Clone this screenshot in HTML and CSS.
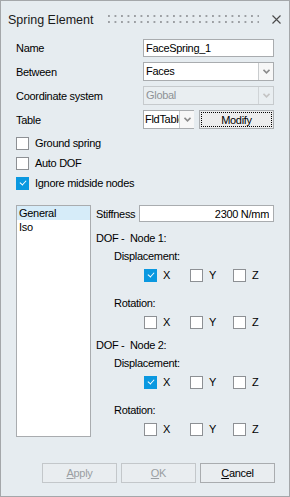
FILE: index.html
```html
<!DOCTYPE html>
<html lang="en">
<head>
    <meta charset="UTF-8">
    <meta name="viewport" content="width=device-width, initial-scale=1.0">
    <title>Spring Element</title>
    <link rel="stylesheet" href="styles.css">
</head>
<body>

<div class="dialog">
    <div class="titlebar">
        <span class="title">Spring Element</span>
        <div class="grip"></div>
        <svg class="close" width="9" height="9" viewBox="0 0 9 9"><path d="M0.5 0.5 L8.5 8.5 M8.5 0.5 L0.5 8.5" stroke="#4a4a4a" stroke-width="1.1" fill="none"/></svg>
    </div>

    <div class="form">
        <div class="field">
            <label>Name</label>
            <input class="text-input" type="text" value="FaceSpring_1">
        </div>
        <div class="field">
            <label>Between</label>
            <div class="select">
                <span class="value">Faces</span>
                <span class="arrow"><svg width="7" height="5" viewBox="0 0 7 5"><path d="M0.5 0.8 L3.5 3.8 L6.5 0.8" stroke="#8c8c8c" stroke-width="1.6" fill="none"/></svg></span>
            </div>
        </div>
        <div class="field">
            <label>Coordinate system</label>
            <div class="select disabled">
                <span class="value">Global</span>
                <span class="arrow"><svg width="7" height="5" viewBox="0 0 7 5"><path d="M0.5 0.8 L3.5 3.8 L6.5 0.8" stroke="#c4c4c4" stroke-width="1.6" fill="none"/></svg></span>
            </div>
        </div>
        <div class="field">
            <label>Table</label>
            <div class="select small">
                <span class="value">FldTable</span>
                <span class="arrow"><svg width="7" height="5" viewBox="0 0 7 5"><path d="M0.5 0.8 L3.5 3.8 L6.5 0.8" stroke="#8c8c8c" stroke-width="1.6" fill="none"/></svg></span>
            </div>
            <button class="modify-button"><span>Modify</span></button>
        </div>

        <div class="checks">
            <div class="check"><span class="box"></span>Ground spring</div>
            <div class="check"><span class="box"></span>Auto DOF</div>
            <div class="check"><span class="box checked"></span>Ignore midside nodes</div>
        </div>

        <div class="details">
            <ul class="list">
                <li class="selected">General</li>
                <li>Iso</li>
            </ul>
            <div class="panel">
                <div class="stiffness">
                    <label>Stiffness</label>
                    <input class="text-input right" type="text" value="2300 N/mm">
                </div>

                <div class="dof">
                    <div class="heading">DOF -&nbsp; Node 1:</div>
                    <div class="sub">Displacement:</div>
                    <div class="axes">
                        <div class="check"><span class="box checked"></span>X</div>
                        <div class="check"><span class="box"></span>Y</div>
                        <div class="check"><span class="box"></span>Z</div>
                    </div>
                    <div class="sub gap">Rotation:</div>
                    <div class="axes">
                        <div class="check"><span class="box"></span>X</div>
                        <div class="check"><span class="box"></span>Y</div>
                        <div class="check"><span class="box"></span>Z</div>
                    </div>
                </div>

                <div class="dof second">
                    <div class="heading">DOF -&nbsp; Node 2:</div>
                    <div class="sub">Displacement:</div>
                    <div class="axes">
                        <div class="check"><span class="box checked"></span>X</div>
                        <div class="check"><span class="box"></span>Y</div>
                        <div class="check"><span class="box"></span>Z</div>
                    </div>
                    <div class="sub gap">Rotation:</div>
                    <div class="axes">
                        <div class="check"><span class="box"></span>X</div>
                        <div class="check"><span class="box"></span>Y</div>
                        <div class="check"><span class="box"></span>Z</div>
                    </div>
                </div>
            </div>
        </div>
    </div>

    <div class="footer">
        <button class="dlg-button" disabled><u>A</u>pply</button>
        <button class="dlg-button" disabled><u>O</u>K</button>
        <button class="dlg-button"><u>C</u>ancel</button>
    </div>
</div>

</body>
</html>
```

FILE: styles.css
```css
body {
    margin: 0;
    font-family: "Liberation Sans", Arial, sans-serif;
    font-size: 11px;
    letter-spacing: -0.3px;
    color: #000;
}
.dialog {
    width: 290px;
    height: 497px;
    box-sizing: border-box;
    border: 1px solid #a4a7aa;
    background-color: #e6ecf0;
    display: flex;
    flex-direction: column;
}
.titlebar {
    height: 37px;
    display: flex;
    align-items: center;
    padding: 0 8px 0 7px;
}
.title {
    font-size: 12.5px;
    letter-spacing: 0;
    color: #1a1a1a;
}
.grip {
    flex: 1;
    align-self: flex-start;
    margin: 14px 13px 0 15px;
    height: 8px;
    background: radial-gradient(circle at 1px 1px, #9c9fa3 0.9px, transparent 1.2px) 0 0 / 6.5px 6px repeat;
}
.close {
    display: block;
    margin-top: -1px;
}
.form {
    padding: 0 15px;
}
.field {
    display: flex;
    align-items: center;
    height: 19px;
    margin-bottom: 5px;
}
.field label {
    width: 127px;
    flex: none;
}
.text-input {
    flex: 1;
    width: 0;
    min-width: 0;
    height: 18px;
    box-sizing: border-box;
    border: 1px solid #a9acaf;
    background: #fff;
    padding: 0 2px;
    font: inherit;
    letter-spacing: inherit;
    color: #000;
    outline: none;
}
.text-input.right {
    text-align: right;
    padding-right: 4px;
}
.select {
    flex: 1;
    height: 19px;
    box-sizing: border-box;
    display: flex;
    border: 1px solid #a9acaf;
    background: #fff;
}
.select .value {
    flex: 1;
    overflow: hidden;
    white-space: nowrap;
    padding-left: 2px;
    line-height: 17px;
}
.select .arrow {
    width: 14px;
    flex: none;
    border-left: 1px solid #c9ccce;
    background: #f7f7f7;
    display: flex;
    align-items: center;
    justify-content: center;
}
.select.disabled {
    border-color: #c6cacd;
    background: #e9eef1;
    color: #8e9296;
}
.select.disabled .arrow {
    background: #e9eef1;
    border-left-color: #d0d4d7;
}
.select.small {
    flex: none;
    width: 51px;
}
.select.small .value {
    width: 34px;
    flex: none;
    padding-left: 1px;
}
.modify-button {
    margin-left: 5px;
    flex: 1;
    height: 19px;
    box-sizing: border-box;
    border: 1px solid #a9acaf;
    background: #ececec;
    padding: 1px;
    font: inherit;
    letter-spacing: inherit;
    color: #000;
}
.modify-button span {
    display: block;
    height: 15px;
    line-height: 14px;
    border: 1px dotted #000;
    box-sizing: border-box;
}
.checks {
    margin-top: -1px;
}
.check {
    display: flex;
    align-items: center;
    height: 20px;
    gap: 6px;
}
.box {
    width: 13px;
    height: 13px;
    box-sizing: border-box;
    border: 1px solid #8d9094;
    background: #fff;
    flex: none;
    position: relative;
}
.box.checked {
    border-color: #0a98e0;
    background: #0a98e0;
}
.box.checked::after {
    content: "";
    position: absolute;
    left: 3px;
    top: 2px;
    width: 5px;
    height: 3px;
    border-left: 1.5px solid #fff;
    border-bottom: 1.5px solid #fff;
    transform: rotate(-48deg);
}
.details {
    display: flex;
    margin-top: 12px;
}
.list {
    list-style-type: none;
    margin: 0;
    padding: 0;
    width: 75px;
    height: 232px;
    box-sizing: border-box;
    border: 1px solid #a9acaf;
    background: #fff;
    flex: none;
}
.list li {
    height: 14px;
    line-height: 14px;
    padding-left: 2px;
}
.list li.selected {
    background-color: #d6ecf9;
}
.panel {
    flex: 1;
    min-width: 0;
    margin-left: 5px;
}
.stiffness {
    display: flex;
    align-items: center;
    height: 17px;
}
.stiffness label {
    width: 43px;
    flex: none;
}
.stiffness .text-input {
    height: 17px;
}
.dof {
    margin-top: 7px;
}
.dof.second {
    margin-top: 4px;
}
.heading, .sub {
    height: 18px;
    line-height: 18px;
}
.sub {
    padding-left: 18px;
}
.sub.gap {
    margin-top: 9px;
}
.axes {
    display: grid;
    grid-template-columns: 46px 43px auto;
    padding-left: 48px;
}
.footer {
    display: flex;
    justify-content: flex-end;
    gap: 4px;
    padding: 0 14px 0 0;
    margin-top: 24px;
}
.dlg-button {
    width: 75px;
    height: 20px;
    box-sizing: border-box;
    border: 1px solid #a9acaf;
    background: #e9edf0;
    font: inherit;
    letter-spacing: inherit;
    color: #000;
    padding: 0;
}
.dlg-button:disabled {
    border-color: #c3c7ca;
    color: #9a9ea2;
}
```
